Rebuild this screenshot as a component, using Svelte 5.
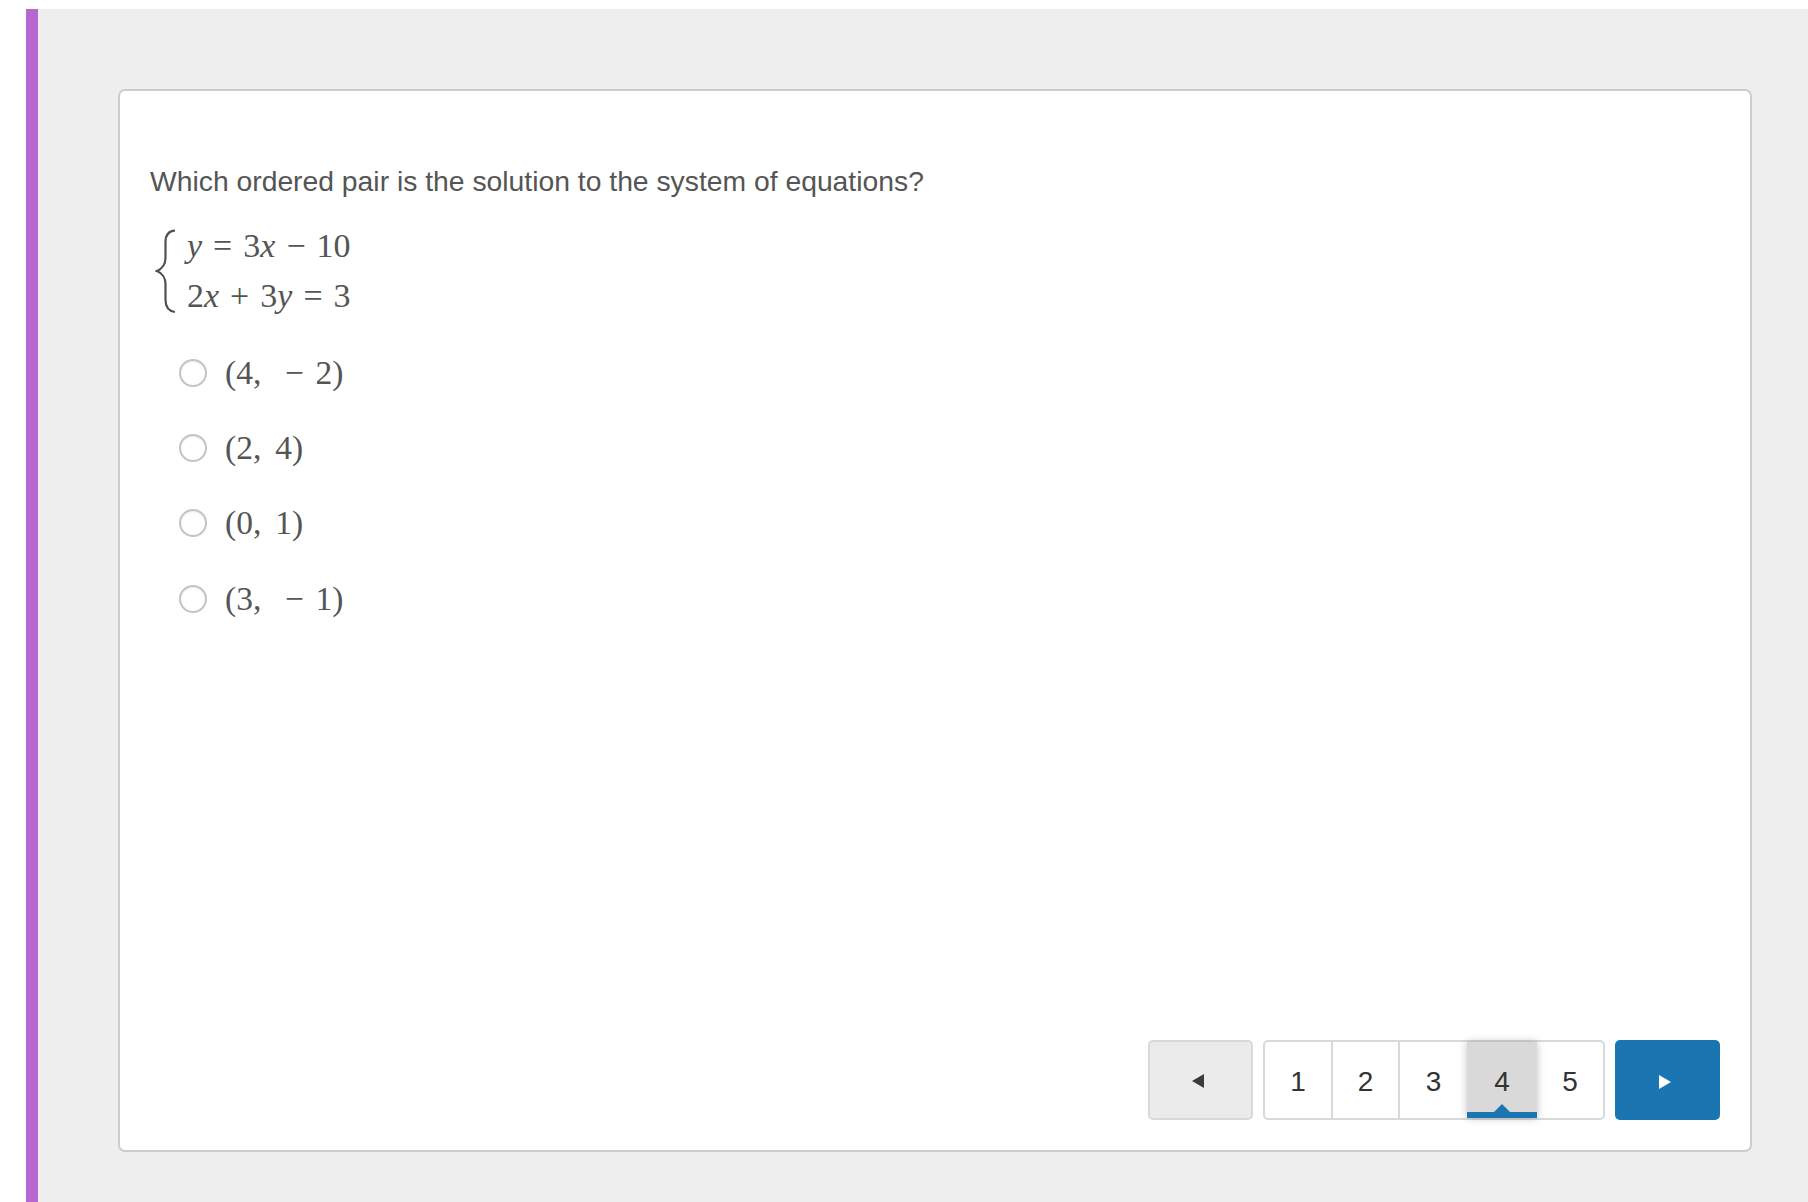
<script>
  const options = [
    { left: '4', right: '− 2', wide: true },
    { left: '2', right: '4', wide: false },
    { left: '0', right: '1', wide: false },
    { left: '3', right: '− 1', wide: true }
  ]
  const pages = [1, 2, 3, 4, 5]
  const current = 4
</script>

<div class="page">
  <div class="accent"></div>
  <main class="stage">
    <section class="card">
      <p class="question">Which ordered pair is the solution to the system of equations?</p>

      <div class="system">
        <svg class="brace" width="22" height="86" viewBox="0 0 22 86" aria-hidden="true">
          <path d="M20 2.5C13 3 10.500 7 10.500 14V30C10.500 36 7 41 2 43C7 45 10.500 50 10.500 56V72C10.500 79 13 83 20 84" fill="none" stroke="#505050" stroke-width="2.200" />
        </svg>
        <div class="lines">
          <div class="line"><i>y</i><span class="op">=</span>3<i>x</i><span class="op">−</span>10</div>
          <div class="line">2<i>x</i><span class="op">+</span>3<i>y</i><span class="op">=</span>3</div>
        </div>
      </div>

      <ul class="options">
        {#each options as o}
          <li class="option">
            <span class="radio"></span>
            <span class="math">({o.left},<span class:wide={o.wide} class="sep"></span>{o.right})</span>
          </li>
        {/each}
      </ul>

      <footer class="nav">
        <button class="arrow prev" aria-label="Previous">
          <svg width="12" height="14" viewBox="0 0 12 14"><path d="M12 0V14L0 7Z" fill="#3a3a3a" /></svg>
        </button>
        <div class="pager">
          {#each pages as p}
            <button class="cell" class:active={p === current}>{p}</button>
          {/each}
        </div>
        <button class="arrow next" aria-label="Next">
          <svg width="12" height="14" viewBox="0 0 12 14"><path d="M0 0V14L12 7Z" fill="#fff" /></svg>
        </button>
      </footer>
    </section>
  </main>
</div>

<style>
  :global(body) {
    margin: 0;
    background: #fff;
  }

  .page {
    display: flex;
    height: 1202px;
    box-sizing: border-box;
    padding: 9px 0 0 26px;
    overflow: hidden;
  }

  .accent {
    width: 12px;
    background: #b768cf;
  }

  .stage {
    flex: 1;
    display: flex;
    box-sizing: border-box;
    padding: 80px 56px 50px 80px;
    background: #eee;
  }

  .card {
    flex: 1;
    display: flex;
    flex-direction: column;
    box-sizing: border-box;
    padding: 72px 30px 30px 30px;
    background: #fff;
    border: 2px solid #ccc;
    border-radius: 7px;
  }

  .question {
    margin: 0;
    font: 28.3px/36px "Liberation Sans", Arial, sans-serif;
    color: #555;
  }

  .system {
    display: flex;
    align-items: center;
    margin-top: 22px;
    margin-left: 5px;
    gap: 10px;
    font: 34px/50px "Liberation Serif", "Times New Roman", serif;
    color: #555;
  }

  .line i {
    font-style: italic;
  }

  .op {
    margin: 0 11px;
  }

  .options {
    list-style: none;
    margin: 16px 0 0 29px;
    padding: 0;
  }

  .option {
    display: flex;
    align-items: center;
    gap: 18px;
    height: 75.300px;
  }

  .radio {
    width: 28px;
    height: 28px;
    box-sizing: border-box;
    margin-top: -4px;
    border: 2px solid #c4c4c4;
    border-radius: 50%;
    background: #fff;
    box-shadow: inset 0 1px 2px rgba(0, 0, 0, 0.08);
  }

  .math {
    margin-top: -4px;
    font: 33.5px/40px "Liberation Serif", "Times New Roman", serif;
    word-spacing: 3px;
    color: #555;
  }

  .sep {
    display: inline-block;
    width: 14px;
  }

  .sep.wide {
    width: 24px;
  }

  .nav {
    display: flex;
    justify-content: flex-end;
    gap: 10px;
    margin-top: auto;
  }

  button {
    padding: 0;
    margin: 0;
    font: 28px "Liberation Sans", Arial, sans-serif;
    color: #333;
    cursor: pointer;
  }

  .arrow {
    display: flex;
    align-items: center;
    justify-content: center;
    width: 105px;
    height: 80px;
    border-radius: 5px;
  }

  .prev {
    background: #ebebeb;
    border: 2px solid #d9d9d9;
  }

  .prev svg {
    margin-right: 6px;
    margin-top: 2px;
  }

  .next {
    background: #1a75b0;
    border: 0;
  }

  .next svg {
    margin-top: 3px;
    margin-left: -6px;
  }

  .pager {
    display: flex;
    height: 80px;
    box-sizing: border-box;
    border: 2px solid #d9d9d9;
    border-radius: 5px;
    background: #fff;
  }

  .cell {
    position: relative;
    width: 67px;
    padding-top: 4px;
    background: none;
    border: 0;
    border-right: 2px solid #d9d9d9;
  }

  .cell:first-child {
    width: 68px;
  }

  .cell:nth-child(3),
  .cell:nth-child(4),
  .cell:last-child {
    border-right: 0;
  }

  .cell:last-child {
    width: 66px;
  }

  .cell.active {
    width: 70px;
    background: #d9d9d9;
    box-shadow: 0 0 8px rgba(0, 0, 0, 0.25);
  }

  /* underline bar of the active page */
  .cell.active::before {
    content: "";
    position: absolute;
    left: 0;
    right: 0;
    bottom: 0;
    height: 6px;
    background: #1a75b0;
  }

  /* small notch above the underline */
  .cell.active::after {
    content: "";
    position: absolute;
    left: 50%;
    bottom: 6px;
    margin-left: -8px;
    border-left: 8px solid transparent;
    border-right: 8px solid transparent;
    border-bottom: 8px solid #1a75b0;
  }
</style>
